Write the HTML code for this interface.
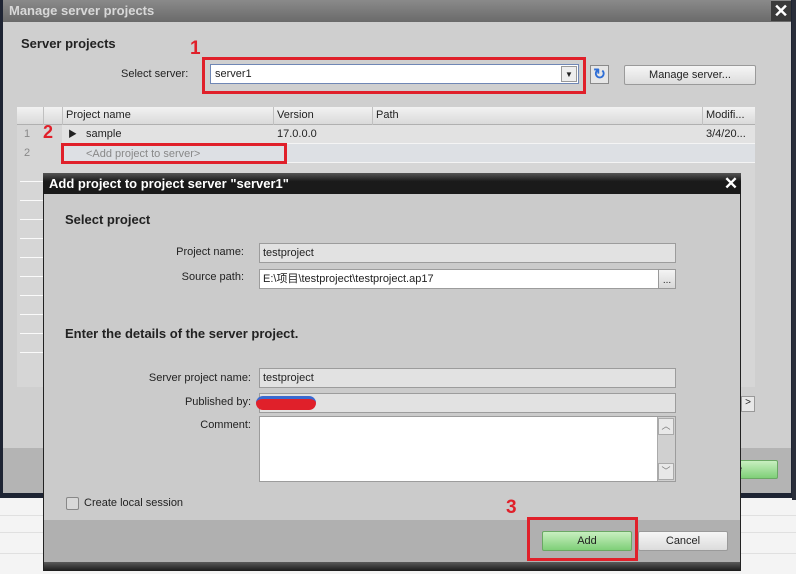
<!DOCTYPE html>
<html><head><meta charset="utf-8"><style>
*{margin:0;padding:0;box-sizing:border-box}
body{width:796px;height:574px;overflow:hidden;position:relative;background:#f4f4f4;font-family:"Liberation Sans","Noto Sans CJK SC",sans-serif;font-size:11px;color:#222}
.a{position:absolute}
.hl{position:absolute;height:1px;background:#e0e0e0}
.red{position:absolute;border:3px solid #e0202a}
.num{position:absolute;color:#e0202a;font-weight:bold;font-size:19px}
.btn{position:absolute;border:1px solid #9a9a9a;border-radius:2px;background:linear-gradient(#f6f6f6,#dcdcdc);text-align:center;font-size:11px}
.green{background:linear-gradient(#c8efc0,#7fcf78);border-color:#6aa864}
.field{position:absolute;border:1px solid #9c9c9c;background:#e2e2e2;padding:0 3px;line-height:18px;font-size:11px}
.lbl{position:absolute;text-align:right;font-size:11px;white-space:nowrap}
</style></head><body>
<div class="hl" style="left:0;top:515px;width:796px"></div>
<div class="hl" style="left:0;top:532px;width:796px"></div>
<div class="hl" style="left:0;top:553px;width:796px"></div>
<div class="a" style="left:792px;top:0;width:4px;height:500px;background:#2a2e3a"></div>
<div class="a" style="left:0;top:0;width:792px;height:498px;background:#1e2433"></div>
<div class="a" style="left:3px;top:0;width:788px;height:493px;background:#cfcfcf"></div>
<div class="a" style="left:3px;top:0;width:788px;height:22px;background:linear-gradient(#8a8a8a,#6a6a6a);color:#d8d8d8;font-weight:bold;font-size:13px;padding:3px 6px">Manage server projects</div>
<div class="a" style="left:771px;top:1px;width:20px;height:20px;background:#3a3a3a;color:#fff;font-size:18px;text-align:center;line-height:20px;font-weight:bold">✕</div>
<div class="a" style="left:21px;top:36px;font-weight:bold;font-size:13px">Server projects</div>
<div class="a" style="left:121px;top:68px">Select server:</div>
<div class="a" style="left:210px;top:64px;width:369px;height:20px;background:#fff;border:1px solid #6f87b5;padding:0 4px;line-height:18px">server1</div>
<div class="a" style="left:561px;top:66px;width:16px;height:16px;border:1px solid #999;background:#eee;font-size:8px;text-align:center;line-height:15px">▼</div>
<div class="red" style="left:202px;top:57px;width:384px;height:37px"></div>
<div class="num" style="left:190px;top:38px">1</div>
<div class="a" style="left:590px;top:65px;width:19px;height:19px;border:1px solid #8a8a8a;background:#e6e6e6;color:#2e6ed6;font-size:15px;text-align:center;line-height:17px;font-weight:bold">↻</div>
<div class="btn" style="left:624px;top:65px;width:132px;height:20px;line-height:18px">Manage server...</div>
<div class="a" style="left:17px;top:107px;width:738px;height:280px;background:#d6d6d6"></div>
<div class="a" style="left:17px;top:107px;width:738px;height:18px;background:linear-gradient(#f2f2f2,#dadada);border-bottom:1px solid #b0b0b0"></div>
<div class="a" style="left:66px;top:109px">Project name</div>
<div class="a" style="left:277px;top:109px">Version</div>
<div class="a" style="left:376px;top:109px">Path</div>
<div class="a" style="left:706px;top:109px">Modifi...</div>
<div class="a" style="left:273px;top:107px;width:1px;height:56px;background:#c0c0c0"></div>
<div class="a" style="left:372px;top:107px;width:1px;height:56px;background:#c0c0c0"></div>
<div class="a" style="left:702px;top:107px;width:1px;height:56px;background:#c0c0c0"></div>
<div class="a" style="left:62px;top:107px;width:1px;height:18px;background:#c0c0c0"></div>
<div class="a" style="left:43px;top:107px;width:1px;height:18px;background:#c0c0c0"></div>
<div class="a" style="left:62px;top:125px;width:693px;height:19px;background:#e2e2e2;border-bottom:1px solid #f4f4f4"></div>
<div class="a" style="left:62px;top:144px;width:693px;height:19px;background:#dde0e4;border-bottom:1px solid #f4f4f4"></div>
<div class="a" style="left:24px;top:128px;color:#888">1</div>
<div class="a" style="left:24px;top:147px;color:#888">2</div>
<div class="a" style="left:68px;top:127px;font-size:9px">▶</div>
<div class="a" style="left:86px;top:128px">sample</div>
<div class="a" style="left:277px;top:128px">17.0.0.0</div>
<div class="a" style="left:706px;top:128px">3/4/20...</div>
<div class="a" style="left:86px;top:148px;color:#888">&lt;Add project to server&gt;</div>
<div class="red" style="left:61px;top:143px;width:226px;height:21px"></div>
<div class="num" style="left:43px;top:122px;font-size:18px">2</div>
<div class="hl" style="left:20px;top:181px;width:23px;background:#fafafa"></div>
<div class="hl" style="left:20px;top:200px;width:23px;background:#fafafa"></div>
<div class="hl" style="left:20px;top:219px;width:23px;background:#fafafa"></div>
<div class="hl" style="left:20px;top:238px;width:23px;background:#fafafa"></div>
<div class="hl" style="left:20px;top:257px;width:23px;background:#fafafa"></div>
<div class="hl" style="left:20px;top:276px;width:23px;background:#fafafa"></div>
<div class="hl" style="left:20px;top:295px;width:23px;background:#fafafa"></div>
<div class="hl" style="left:20px;top:314px;width:23px;background:#fafafa"></div>
<div class="hl" style="left:20px;top:333px;width:23px;background:#fafafa"></div>
<div class="hl" style="left:20px;top:352px;width:23px;background:#fafafa"></div>
<div class="a" style="left:741px;top:396px;width:14px;height:16px;border:1px solid #999;background:#e8e8e8;font-size:10px;text-align:center">&gt;</div>
<div class="a" style="left:3px;top:448px;width:788px;height:45px;background:#b4b4b4"></div>
<div class="btn green" style="left:735px;top:460px;width:43px;height:19px;line-height:17px;text-align:left">e</div>
<div class="a" style="left:43px;top:173px;width:698px;height:398px;background:#cbcbcb;border:1px solid #222"></div>
<div class="a" style="left:43px;top:173px;width:698px;height:21px;background:linear-gradient(#555,#1a1a1a 40%);color:#fff;font-weight:bold;font-size:13px;padding:3px 6px">Add project to project server "server1"</div>
<div class="a" style="left:721px;top:174px;width:20px;height:20px;color:#fff;font-size:17px;text-align:center;line-height:20px;font-weight:bold">✕</div>
<div class="a" style="left:65px;top:212px;font-weight:bold;font-size:13px">Select project</div>
<div class="lbl" style="left:100px;top:246px;width:144px">Project name:</div>
<div class="field" style="left:259px;top:243px;width:417px;height:20px">testproject</div>
<div class="lbl" style="left:100px;top:271px;width:144px">Source path:</div>
<div class="field" style="left:259px;top:269px;width:400px;height:20px;background:#fff">E:\项目\testproject\testproject.ap17</div>
<div class="a" style="left:658px;top:269px;width:18px;height:20px;border:1px solid #999;background:linear-gradient(#f4f4f4,#d8d8d8);font-size:10px;text-align:center;line-height:22px">...</div>
<div class="a" style="left:65px;top:326px;font-weight:bold;font-size:13px">Enter the details of the server project.</div>
<div class="lbl" style="left:80px;top:372px;width:171px">Server project name:</div>
<div class="field" style="left:259px;top:368px;width:417px;height:20px">testproject</div>
<div class="lbl" style="left:80px;top:396px;width:171px">Published by:</div>
<div class="field" style="left:259px;top:393px;width:417px;height:20px"></div>
<div class="a" style="left:256px;top:396px;width:60px;height:14px;background:#e0202a;border-radius:7px;border-top:3px solid #3a6ad0"></div>
<div class="lbl" style="left:80px;top:419px;width:171px">Comment:</div>
<div class="a" style="left:259px;top:416px;width:417px;height:66px;background:#fff;border:1px solid #9c9c9c"></div>
<div class="a" style="left:657px;top:417px;width:18px;height:64px;background:#d0d0d0;border-left:1px solid #aaa"></div>
<div class="a" style="left:658px;top:418px;width:16px;height:17px;background:#e8e8e8;border:1px solid #aaa;font-size:9px;text-align:center;color:#777">︿</div>
<div class="a" style="left:658px;top:463px;width:16px;height:17px;background:#e8e8e8;border:1px solid #aaa;font-size:9px;text-align:center;color:#777">﹀</div>
<div class="a" style="left:66px;top:497px;width:13px;height:13px;border:1px solid #888;background:#d8d8d8;border-radius:2px"></div>
<div class="a" style="left:84px;top:497px">Create local session</div>
<div class="a" style="left:44px;top:520px;width:696px;height:42px;background:#b0b0b0"></div>
<div class="a" style="left:44px;top:562px;width:696px;height:9px;background:linear-gradient(#5a5a5a,#1a1a1a)"></div>
<div class="btn green" style="left:542px;top:531px;width:90px;height:20px;line-height:18px">Add</div>
<div class="btn" style="left:638px;top:531px;width:90px;height:20px;line-height:18px">Cancel</div>
<div class="red" style="left:527px;top:517px;width:111px;height:44px"></div>
<div class="num" style="left:506px;top:497px">3</div>
</body></html>
